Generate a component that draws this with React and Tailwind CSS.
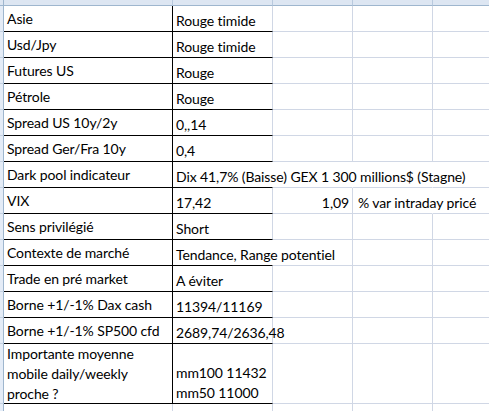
import React from "react"

const rows = [
    { a: "Asie", b: "Rouge timide" },
    { a: "Usd/Jpy", b: "Rouge timide" },
    { a: "Futures US", b: "Rouge" },
    { a: "Pétrole", b: "Rouge" },
    { a: "Spread US 10y/2y", b: "0,,14" },
    { a: "Spread Ger/Fra 10y", b: "0,4" },
    { a: "Dark pool indicateur", b: "Dix 41,7% (Baisse) GEX 1 300 millions$ (Stagne)", spill: 3 },
    { a: "VIX", b: "17,42", c: "1,09", d: "% var intraday pricé" },
    { a: "Sens privilégié", b: "Short" },
    { a: "Contexte de marché", b: "Tendance, Range potentiel", spill: 1 },
    { a: "Trade en pré market", b: "A éviter" },
    { a: "Borne +1/-1% Dax cash", b: "11394/11169" },
    { a: "Borne +1/-1% SP500 cfd", b: "2689,74/2636,48" },
]

const grid = "border-r border-b border-[#d0d7e5]"

function Row({ row }) {
    const spill = row.spill || 0
    return (
        <>
            <div className="h-[26px] bg-[#e4ecf7] border-r border-b border-r-[#9eb6ce] border-b-[#c5d2e3]" />
            <div className="h-[26px] flex items-center px-[3px] border-r border-b border-black leading-5 whitespace-nowrap">
                {row.a}
            </div>
            <div className={`h-[26px] flex items-end px-[3px] border-b border-b-black border-r leading-5 whitespace-nowrap overflow-visible ${spill >= 1 ? "border-r-transparent" : "border-r-[#d0d7e5]"}`}>
                {row.b}
            </div>
            <div className={`h-[26px] flex items-end justify-end px-[3px] border-b border-b-[#d0d7e5] border-r leading-5 whitespace-nowrap ${spill >= 2 ? "border-r-transparent" : "border-r-[#d0d7e5]"}`}>
                {row.c}
            </div>
            <div className={`h-[26px] flex items-end px-[5px] border-b border-b-[#d0d7e5] border-r leading-5 whitespace-nowrap ${spill >= 3 || row.d ? "border-r-transparent" : "border-r-[#d0d7e5]"}`}>
                {row.d}
            </div>
            <div className="h-[26px] border-b border-[#d0d7e5]" />
        </>
    )
}

export default function App() {
    return (
        <div className="w-[489px] h-[411px] overflow-hidden bg-white text-black text-[14px] tracking-[-0.1px]" style={{ fontFamily: "Lato, 'Liberation Sans', sans-serif" }}>
            <div className="grid grid-cols-[4px_169px_100px_80px_80px_1fr]">
                {/* header strip */}
                <div className="h-[6px] bg-[#dde6f2] border-r border-b border-[#9eb6ce]" />
                <div className="h-[6px] bg-[#dde6f2] border-r border-b border-r-[#b8c9de] border-b-[#9eb6ce]" />
                <div className="h-[6px] bg-[#dde6f2] border-r border-b border-r-[#b8c9de] border-b-[#9eb6ce]" />
                <div className="h-[6px] bg-[#dde6f2] border-r border-b border-r-[#b8c9de] border-b-[#9eb6ce]" />
                <div className="h-[6px] bg-[#dde6f2] border-r border-b border-r-[#b8c9de] border-b-[#9eb6ce]" />
                <div className="h-[6px] bg-[#dde6f2] border-b border-[#9eb6ce]" />

                {rows.map((r, i) => (
                    <Row key={i} row={r} />
                ))}

                {/* tall last row */}
                <div className="h-[60px] bg-[#e4ecf7] border-r border-b border-r-[#9eb6ce] border-b-[#c5d2e3]" />
                <div className="h-[60px] flex items-center px-[3px] border-r border-b border-black leading-5">
                    <div>
                        Importante moyenne
                        <br />
                        mobile daily/weekly
                        <br />
                        proche ?
                    </div>
                </div>
                <div className="h-[60px] flex items-end px-[3px] border-b border-b-black border-r border-r-[#d0d7e5] leading-5 whitespace-nowrap">
                    <div>
                        mm100 11432
                        <br />
                        mm50 11000
                    </div>
                </div>
                <div className={`h-[60px] ${grid}`} />
                <div className={`h-[60px] ${grid}`} />
                <div className="h-[60px] border-b border-[#d0d7e5]" />

                {/* empty row below */}
                <div className="h-[26px] bg-[#e4ecf7] border-r border-[#9eb6ce]" />
                <div className="h-[26px] border-r border-[#d0d7e5]" />
                <div className="h-[26px] border-r border-[#d0d7e5]" />
                <div className="h-[26px] border-r border-[#d0d7e5]" />
                <div className="h-[26px] border-r border-[#d0d7e5]" />
                <div className="h-[26px]" />
            </div>
        </div>
    )
}
